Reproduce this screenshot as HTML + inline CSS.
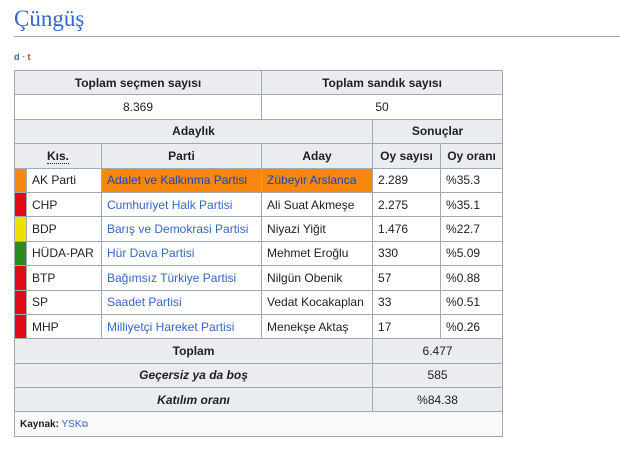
<!DOCTYPE html>
<html><head><meta charset="utf-8"><style>
body{margin:0;background:#fff;font-family:"Liberation Sans",sans-serif;color:#202122;}
h1{position:absolute;left:14px;top:6px;margin:0;font-family:"Liberation Serif",serif;font-weight:normal;font-size:23px;color:#3366cc;}
.hr{position:absolute;left:14px;top:36px;width:606px;height:1px;background:#a2a9b1;}
.dt{position:absolute;left:14px;top:52px;font-size:9px;font-weight:bold;}
table{position:absolute;left:14px;top:70px;border-collapse:collapse;font-size:12px;background:#f8f9fa;width:488px;table-layout:fixed;}
td,th{border:1px solid #a2a9b1;height:24.4px;padding:0 5px;box-sizing:border-box;white-space:nowrap;}
th{background:#eaecf0;font-weight:bold;text-align:center;}
td{background:#fff;}
a{color:#3366cc;text-decoration:none;}
.o a{color:#1a47b0;}
.c{padding:0;}
.n{text-align:center;}
.tot td,.tot th{background:#eaecf0;}
</style></head><body>
<h1>Çüngüş</h1><div class="hr"></div>
<div class="dt"><span style="color:#3366cc">d</span> <span style="color:#888">·</span> <span style="color:#d33">t</span></div>
<table>
<colgroup><col style="width:12px"><col style="width:75px"><col style="width:160px"><col style="width:111px"><col style="width:68px"><col style="width:62px"></colgroup>
<tr><th colspan="3">Toplam seçmen sayısı</th><th colspan="3">Toplam sandık sayısı</th></tr>
<tr><td colspan="3" class="n">8.369</td><td colspan="3" class="n">50</td></tr>
<tr><th colspan="4">Adaylık</th><th colspan="2">Sonuçlar</th></tr>
<tr><th colspan="2"><span style="border-bottom:1px dotted #202122">Kıs.</span></th><th>Parti</th><th>Aday</th><th>Oy sayısı</th><th>Oy oranı</th></tr>
<tr class="o"><td class="c" style="background:#f8870e"></td><td>AK Parti</td><td style="background:#f8870e"><a>Adalet ve Kalkınma Partisi</a></td><td style="background:#f8870e"><a>Zübeyir Arslanca</a></td><td>2.289</td><td>%35.3</td></tr>
<tr><td class="c" style="background:#e30a17"></td><td>CHP</td><td><a>Cumhuriyet Halk Partisi</a></td><td>Ali Suat Akmeşe</td><td>2.275</td><td>%35.1</td></tr>
<tr><td class="c" style="background:#f0e000"></td><td>BDP</td><td><a>Barış ve Demokrasi Partisi</a></td><td>Niyazi Yiğit</td><td>1.476</td><td>%22.7</td></tr>
<tr><td class="c" style="background:#2b8a1e"></td><td>HÜDA-PAR</td><td><a>Hür Dava Partisi</a></td><td>Mehmet Eroğlu</td><td>330</td><td>%5.09</td></tr>
<tr><td class="c" style="background:#e30a17"></td><td>BTP</td><td><a>Bağımsız Türkiye Partisi</a></td><td>Nilgün Obenik</td><td>57</td><td>%0.88</td></tr>
<tr><td class="c" style="background:#e30a17"></td><td>SP</td><td><a>Saadet Partisi</a></td><td>Vedat Kocakaplan</td><td>33</td><td>%0.51</td></tr>
<tr><td class="c" style="background:#e30a17"></td><td>MHP</td><td><a>Milliyetçi Hareket Partisi</a></td><td>Menekşe Aktaş</td><td>17</td><td>%0.26</td></tr>
<tr class="tot"><th colspan="4">Toplam</th><td colspan="2" class="n">6.477</td></tr>
<tr class="tot"><th colspan="4"><i>Geçersiz ya da boş</i></th><td colspan="2" class="n">585</td></tr>
<tr class="tot"><th colspan="4"><i>Katılım oranı</i></th><td colspan="2" class="n">%84.38</td></tr>
<tr><td colspan="6" style="background:#f8f9fa;font-size:10px;height:25px"><b>Kaynak:</b> <a>YSK</a><span style="color:#3366cc;font-size:9px">⧉</span></td></tr>
</table>
</body></html>
